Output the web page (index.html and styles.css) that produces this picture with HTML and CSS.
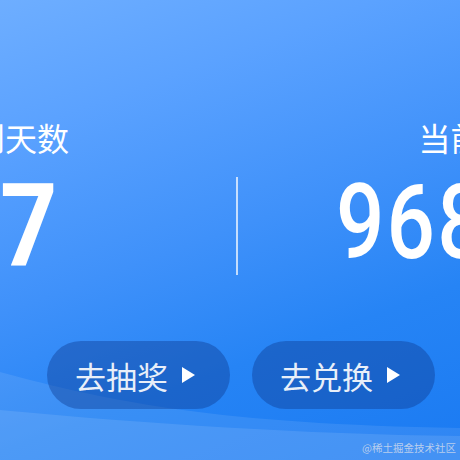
FILE: index.html
```html
<!DOCTYPE html>
<html lang="zh-CN">
<head>
<meta charset="utf-8">
<title>积分</title>
<link rel="stylesheet" href="styles.css">
</head>
<body>
<div class="card">
  <svg class="waves" width="460" height="460" viewBox="0 0 460 460">
    <path d="M0,372 C110,402 220,424 460,428 L460,460 L0,460 Z" fill="#ffffff" fill-opacity="0.09"/>
    <path d="M0,410 C150,424 300,434 460,436 L460,460 L0,460 Z" fill="#ffffff" fill-opacity="0.1"/>
  </svg>
  <div class="stats">
    <div class="col col-left">
      <div class="label label-left">签到天数</div>
      <div class="num num-left">7</div>
    </div>
    <div class="divider"></div>
    <div class="col col-right">
      <div class="label label-right">当前积分</div>
      <div class="num num-right">9688</div>
    </div>
  </div>
  <div class="actions">
    <div class="btn">去抽奖<span class="tri"></span></div>
    <div class="btn">去兑换<span class="tri"></span></div>
  </div>
  <div class="watermark">@稀土掘金技术社区</div>
</div>
</body>
</html>
```
FILE: styles.css
```css
html, body {
  margin: 0;
  padding: 0;
}
body {
  width: 460px;
  height: 460px;
  overflow: hidden;
  font-family: "Noto Sans CJK SC", "Noto Sans", sans-serif;
}
.card {
  position: relative;
  width: 460px;
  height: 460px;
  overflow: hidden;
  background: linear-gradient(160deg, #6eaeff 0%, #5ba2ff 22%, #3f91fa 50%, #2684f5 72%, #1a7af2 100%);
  display: flex;
  flex-direction: column;
}
.waves {
  position: absolute;
  left: 0;
  top: 0;
  z-index: 0;
}
.stats {
  position: relative;
  z-index: 1;
  display: flex;
  align-items: flex-start;
  padding-top: 121px;
  white-space: nowrap;
}
.col {
  display: flex;
  flex-direction: column;
}
.col-left {
  width: 293px;
  margin-left: -59px;
  flex: none;
}
.label {
  font-size: 32px;
  line-height: 32px;
  color: #ffffff;
  height: 47px;
}
.num {
  font-family: Roboto, "Liberation Sans", sans-serif;
  color: #ffffff;
  line-height: 1;
  display: inline-block;
  transform-origin: left top;
}
.num-left {
  font-size: 115px;
  font-weight: 700;
  margin-left: 59px;
  transform: scaleX(0.87);
}
.divider {
  flex: none;
  width: 1.5px;
  height: 98px;
  margin-top: 56px;
  margin-left: 2px;
  background: rgba(255, 255, 255, 0.7);
}
.col-right {
  flex: none;
}
.label-right {
  margin-left: 181px;
}
.num-right {
  font-size: 104px;
  font-weight: 500;
  margin-left: 98px;
  margin-top: 3px;
  letter-spacing: 2.6px;
  transform: scaleX(0.82);
}
.actions {
  position: relative;
  z-index: 1;
  display: flex;
  gap: 22px;
  margin-top: 58px;
  padding-left: 47px;
}
.btn {
  width: 183px;
  height: 68px;
  box-sizing: border-box;
  border-radius: 34px;
  background: rgba(13, 54, 140, 0.4);
  display: flex;
  align-items: center;
  padding-left: 28px;
  font-size: 31px;
  color: #e8eff9;
  line-height: 1;
}
.tri {
  width: 0;
  height: 0;
  margin-left: 14px;
  border-top: 8.5px solid transparent;
  border-bottom: 8.5px solid transparent;
  border-left: 13px solid #ffffff;
}
.watermark {
  position: absolute;
  right: 4px;
  bottom: 7px;
  z-index: 1;
  font-size: 10.5px;
  color: rgba(215, 222, 235, 0.8);
  line-height: 1;
}
```
